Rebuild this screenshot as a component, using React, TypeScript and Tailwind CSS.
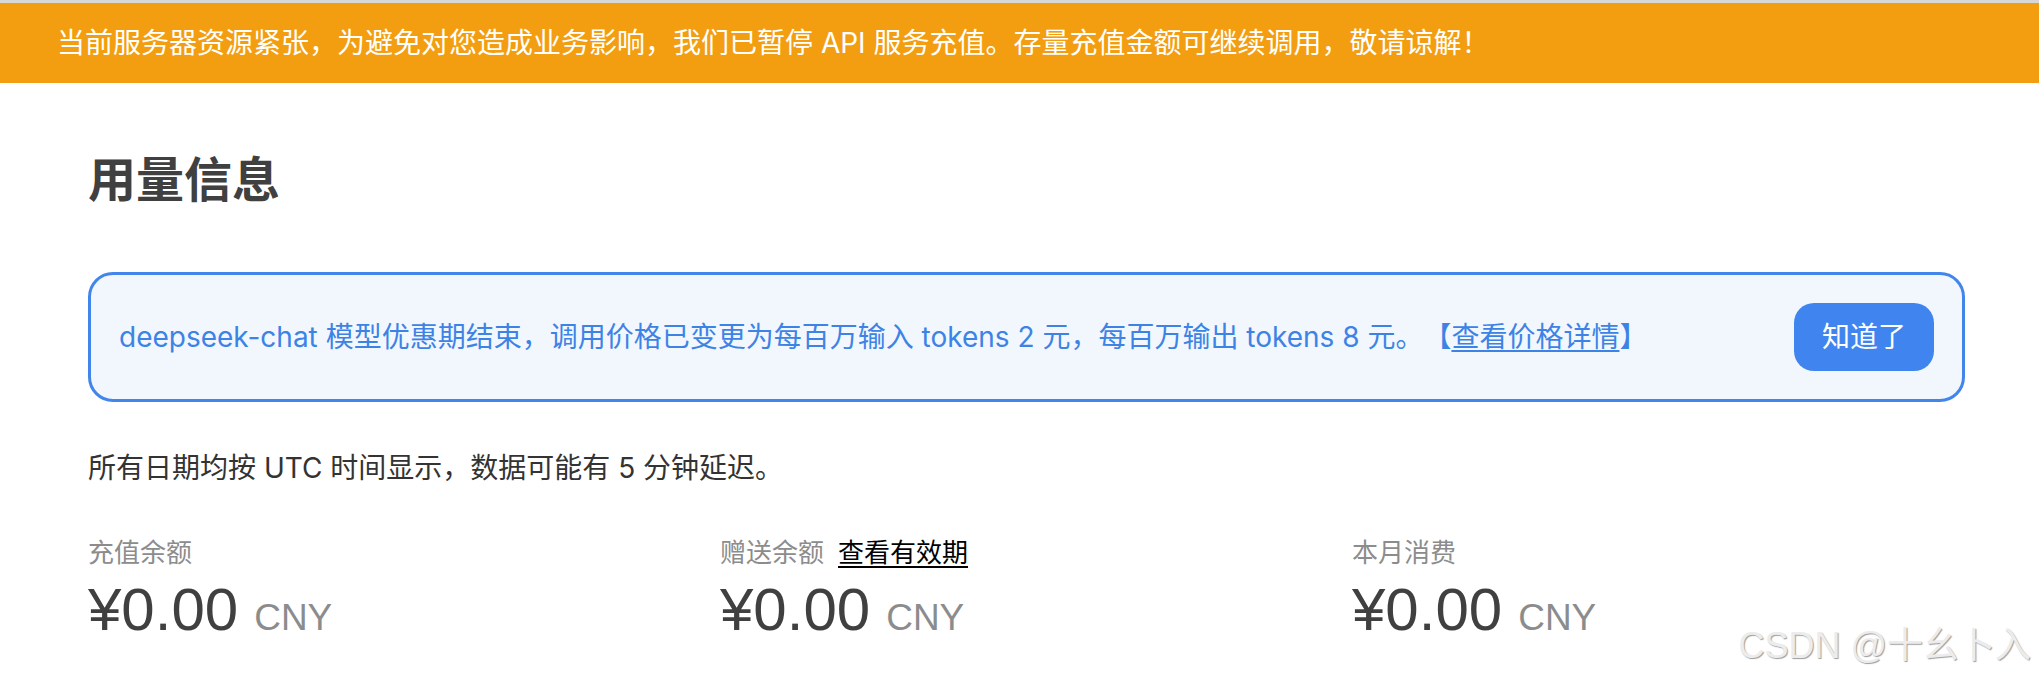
const sans = 'font-[Inter,"Noto_Sans_CJK_SC",sans-serif]';

type Stat = {
  label: string;
  link?: string;
};

const stats: Stat[] = [
  { label: '充值余额' },
  { label: '赠送余额', link: '查看有效期' },
  { label: '本月消费' },
];

const App = () => {
  return (
    <div className={`relative min-h-screen bg-white ${sans}`}>
      <div className="h-[3px] bg-[#d7d7d7]" />
      <div className="flex h-[80px] items-center bg-[#f39e11] pl-[57px] text-[28px] leading-[28px] text-white">
        当前服务器资源紧张，为避免对您造成业务影响，我们已暂停 API 服务充值。存量充值金额可继续调用，敬请谅解！
      </div>

      <div className="pl-[88px] pr-[74px]">
        <h1 className="mt-[73px] text-[48px] leading-[48px] font-bold text-[#404040]">用量信息</h1>

        <div className="mt-[68px] flex h-[130px] items-center justify-between rounded-[25px] border-[3px] border-[#4286ec] bg-[#f1f7fd] pl-[28px] pr-[28px]">
          <p className="text-[28px] leading-[28px] text-[#3d83e6] [text-spacing-trim:space-all]">
            deepseek-chat 模型优惠期结束，调用价格已变更为每百万输入 tokens 2 元，每百万输出 tokens 8 元。【
            <a className="underline underline-offset-[3px]">查看价格详情</a>】
          </p>
          <button className="h-[68px] w-[140px] rounded-[20px] bg-[#4085ef] text-[28px] leading-[28px] text-white">
            知道了
          </button>
        </div>

        <p className="mt-[52px] text-[28px] leading-[28px] text-[#333333]">
          所有日期均按 UTC 时间显示，数据可能有 5 分钟延迟。
        </p>

        <div className="mt-[58px] grid grid-cols-[632px_632px_1fr]">
          {stats.map((s) => (
            <div key={s.label}>
              <div className="flex gap-[14px] text-[26px] leading-[26px]">
                <span className="text-[#8c8c8c]">{s.label}</span>
                {s.link && <a className="text-black underline underline-offset-[4px]">{s.link}</a>}
              </div>
              <div className='mt-[14px] flex items-baseline font-["Liberation_Sans",sans-serif]'>
                <span className="text-[60px] leading-[60px] text-[#404040]">¥0.00</span>
                <span className="ml-[16px] text-[37px] leading-[37px] text-[#8c8c8c]">CNY</span>
              </div>
            </div>
          ))}
        </div>
      </div>

      {/* watermark */}
      <div className='absolute right-[8px] top-[628px] font-["Liberation_Sans","Noto_Sans_CJK_SC",sans-serif] text-[36px] leading-[36px] text-[#ececec] [text-shadow:1px_1px_1px_#9c9c9c]'>
        CSDN @十幺卜入
      </div>
    </div>
  );
};

export default App;
